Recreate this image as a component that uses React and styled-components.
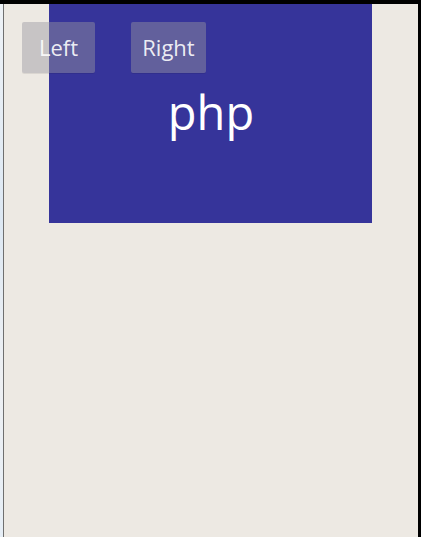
import React from "react";
import styled, { createGlobalStyle } from "styled-components";

const GlobalStyle = createGlobalStyle`
  html, body {
    margin: 0;
    padding: 0;
    background: #000;
  }
  body {
    font-family: "Open Sans", "Noto Sans", sans-serif;
  }
`;

const Screen = styled.div`
  display: flex;
  height: 533px;
  width: 421px;
  border-top: 4px solid #000;
  background: #000;
`;

const LeftEdge = styled.div`
  width: 3px;
  background: linear-gradient(#eef2f6, #dde8f3 40%, #eef0f3 70%, #e6eef6);
  border-right: 1px solid #6f6f6f;
`;

const Canvas = styled.div`
  position: relative;
  flex: 1;
  display: flex;
  align-items: flex-start;
  padding-left: 45px;
  background: #ede9e3;
`;

const RightEdge = styled.div`
  width: 3px;
  background: #000;
`;

const Panel = styled.div`
  width: 323px;
  height: 219px;
  background: #36349a;
  display: flex;
  justify-content: center;
  align-items: flex-start;
  padding-top: 85px;
  box-sizing: border-box;
`;

const Title = styled.span`
  color: #fff;
  font-family: "Open Sans", "Noto Sans", sans-serif;
  font-size: 47px;
  line-height: 1;
  margin-left: 1px;
`;

const Toolbar = styled.div`
  position: absolute;
  top: 18px;
  left: 18px;
  display: flex;
  gap: 36px;
`;

const Button = styled.button`
  width: ${(p) => p.$width}px;
  height: 51px;
  padding: 0 0 1px;
  border: none;
  border-radius: 2px;
  background: rgba(152, 150, 160, 0.45);
  box-shadow: 0 1px 0 rgba(0, 0, 0, 0.08);
  color: rgba(255, 255, 255, 0.9);
  font-family: "Open Sans", "Noto Sans", sans-serif;
  font-size: 22px;
  line-height: 1;
`;

export default function App() {
  return (
    <>
      <GlobalStyle />
      <Screen>
        <LeftEdge />
        <Canvas>
          <Panel>
            <Title>php</Title>
          </Panel>
          <Toolbar>
            <Button $width={73}>Left</Button>
            <Button $width={75}>Right</Button>
          </Toolbar>
        </Canvas>
        <RightEdge />
      </Screen>
    </>
  );
}
